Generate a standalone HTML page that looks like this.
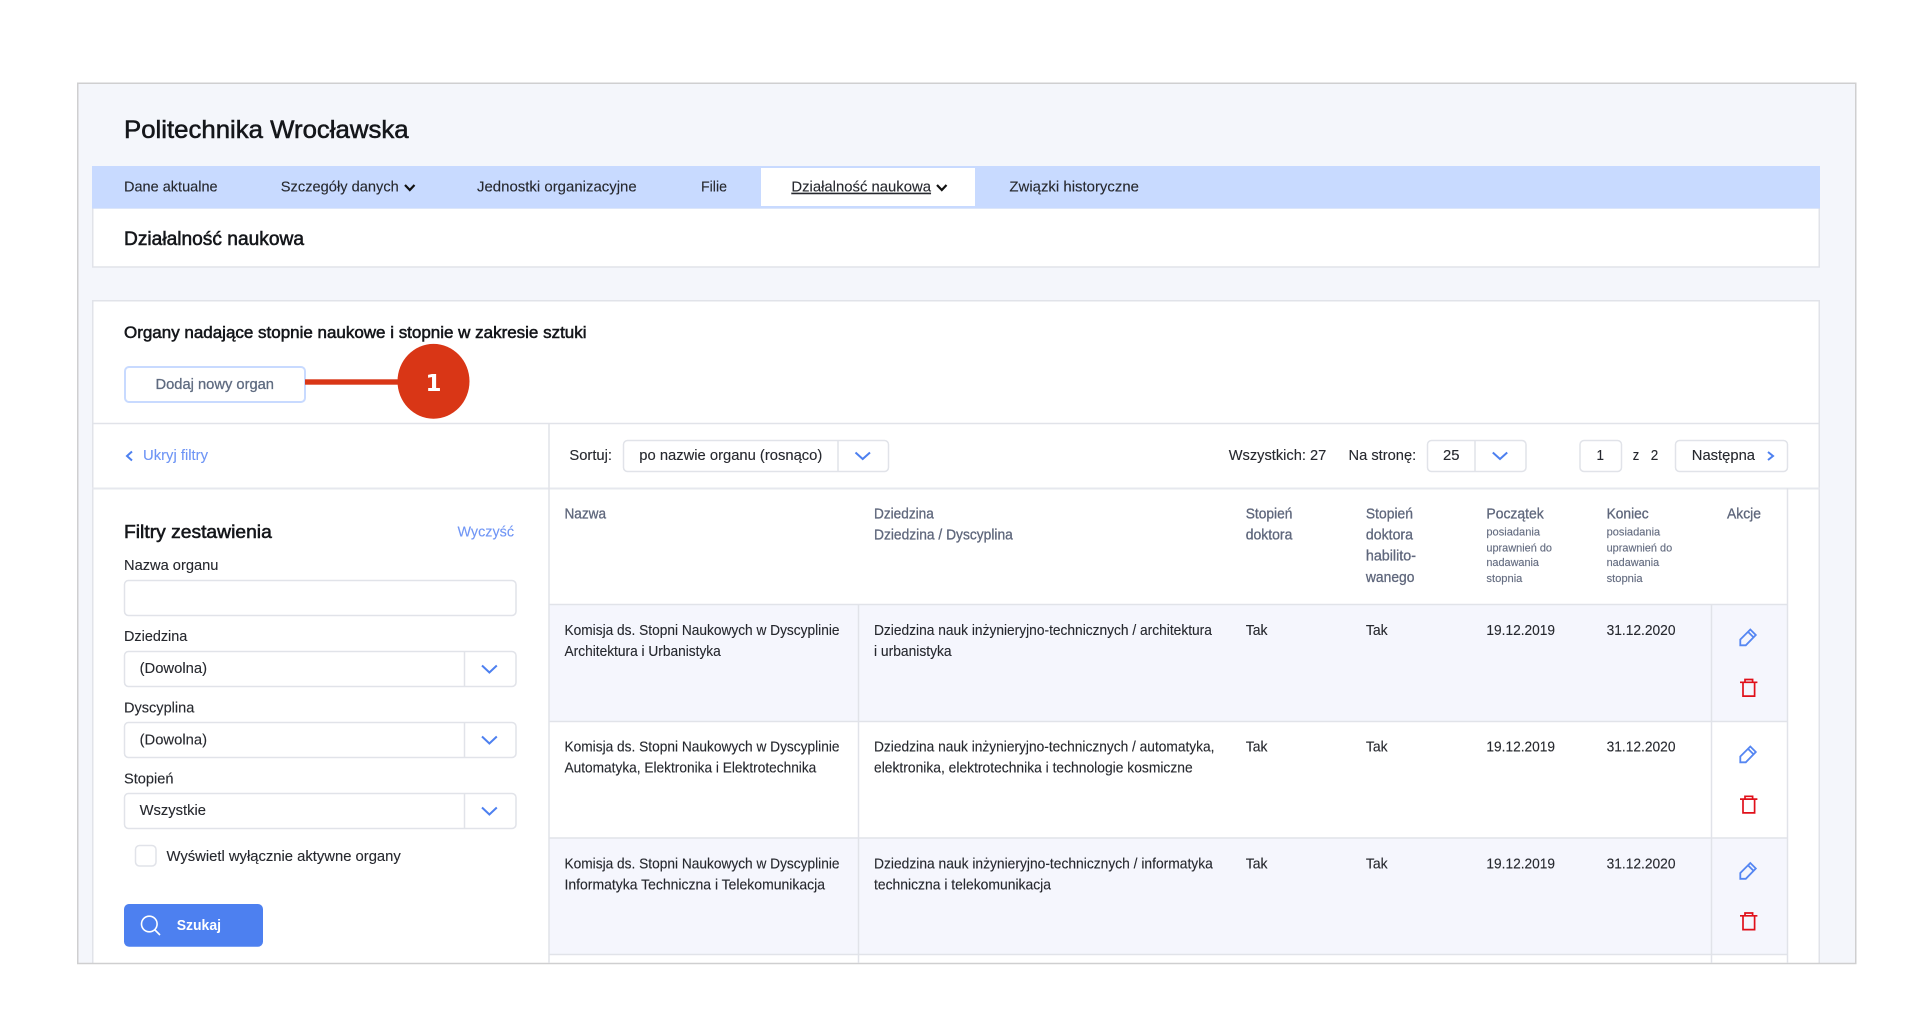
<!DOCTYPE html>
<html lang="pl">
<head>
<meta charset="utf-8">
<title>Politechnika Wrocławska</title>
<style>
html,body{margin:0;padding:0;background:#fff;width:1916px;height:1021px;overflow:hidden}
svg{display:block}
text{font-family:"Liberation Sans",sans-serif;font-size:14.5px;fill:#26282e;stroke:#26282e;stroke-width:.12}
.m{stroke:#14161a;stroke-width:.55;fill:#14161a}
.h{fill:#5f677c;stroke:#5f677c;stroke-width:.3;font-size:14.5px}
.s{fill:#666e82;stroke:#666e82;stroke-width:.15;font-size:11px}
.l{fill:#6f95f5;stroke:#6f95f5}
.n{font-size:15px}
.ln{stroke:#e1e3e9;stroke-width:1.5;fill:none}
.box{fill:#fff;stroke:#e1e3e9;stroke-width:1.5}
.cv{fill:none;stroke:#4d80f0;stroke-width:2}
.ed{fill:none;stroke:#5586f2;stroke-width:1.8}
.tr{fill:none;stroke:#e0101a;stroke-width:1.7}
</style>
</head>
<body>
<svg width="1916" height="1021" viewBox="0 0 1916 1021" xmlns="http://www.w3.org/2000/svg">
<defs>
<g id="pen"><path d="M1 16.8V11L11 1L16.5 6.5L6.5 16.8Z"/><path d="M8.8 3.4L14.2 8.8"/></g>
<g id="bin"><path d="M0 3.8H17.4"/><path d="M5 3.8V1H12.6V3.8"/><path d="M3 3.8V17.6H14.6V3.8"/></g>
</defs>
<rect width="1916" height="1021" fill="#fff"/>
<rect x="77.75" y="83.25" width="1778" height="880.5" fill="#f4f6fb" stroke="#cfcfd0" stroke-width="1.5"/>

<text x="124" y="138" class="m" style="font-size:25px" textLength="284.6" lengthAdjust="spacingAndGlyphs">Politechnika Wrocławska</text>

<rect x="92.75" y="208" width="1726.5" height="59" fill="#fff" stroke="#e1e3e9" stroke-width="1.5"/>
<rect x="92" y="166" width="1728" height="42.5" fill="#c8daff"/>
<rect x="761" y="168" width="214" height="38" fill="#fff"/>
<g class="n">
<text x="124" y="191.7" class="n" textLength="93.6" lengthAdjust="spacingAndGlyphs">Dane aktualne</text>
<text x="280.8" y="191.7" class="n" textLength="118" lengthAdjust="spacingAndGlyphs">Szczegóły danych</text>
<text x="477" y="191.7" class="n" textLength="159.7" lengthAdjust="spacingAndGlyphs">Jednostki organizacyjne</text>
<text x="701" y="191.7" class="n" textLength="26" lengthAdjust="spacingAndGlyphs">Filie</text>
<text x="791.4" y="191.7" class="n" text-decoration="underline" textLength="139.6" lengthAdjust="spacingAndGlyphs">Działalność naukowa</text>
<text x="1009.4" y="191.7" class="n" textLength="129.6" lengthAdjust="spacingAndGlyphs">Związki historyczne</text>
</g>
<path d="M405 185L409.8 190L414.5 185" fill="none" stroke="#111" stroke-width="2.2"/>
<path d="M937 185L941.8 190L946.5 185" fill="none" stroke="#111" stroke-width="2.2"/>

<text x="124" y="245" class="m" style="font-size:19px" textLength="180" lengthAdjust="spacingAndGlyphs">Działalność naukowa</text>

<rect x="92.75" y="300.75" width="1726.5" height="664" fill="#fff" stroke="#e1e3e9" stroke-width="1.5"/>
<rect x="77" y="963" width="1779.5" height="58" fill="#fff"/>
<path d="M77 963.5H1856.5" stroke="#cfcfd0" stroke-width="1.5"/>

<text x="124" y="338" class="m" style="font-size:17px" textLength="462.5" lengthAdjust="spacingAndGlyphs">Organy nadające stopnie naukowe i stopnie w zakresie sztuki</text>

<rect x="125" y="367" width="180" height="35" rx="4" fill="#fff" stroke="#c8daff" stroke-width="2"/>
<text x="155.5" y="389" style="font-size:15px;fill:#5f6b80;stroke:#5f6b80;stroke-width:.3" textLength="118.5" lengthAdjust="spacingAndGlyphs">Dodaj nowy organ</text>
<rect x="305" y="379.3" width="96" height="5.4" fill="#d93616"/>
<ellipse cx="433.5" cy="381.3" rx="36" ry="37.4" fill="#d93616"/>
<text x="433.5" y="391" text-anchor="middle" style="font-family:'DejaVu Sans',sans-serif;font-size:23px;font-weight:bold;fill:#fff;stroke:none">1</text>

<path class="ln" d="M92 423.5H1820"/>
<path d="M92 488.5H1820" stroke="#e6e8ee" stroke-width="2"/>

<path d="M132 451.5L127 456L132 460.5" fill="none" stroke="#4d80f0" stroke-width="2"/>
<text x="143" y="460" class="l n" textLength="65" lengthAdjust="spacingAndGlyphs">Ukryj filtry</text>

<text x="569.4" y="460" class="n" textLength="42.6" lengthAdjust="spacingAndGlyphs">Sortuj:</text>
<rect x="623.5" y="440.5" width="265" height="31" rx="4" class="box"/>
<path class="ln" d="M838 441V471"/>
<text x="639.3" y="460" class="n" textLength="183" lengthAdjust="spacingAndGlyphs">po nazwie organu (rosnąco)</text>
<path class="cv" d="M855.5 452.5L862.7 459L870 452.5"/>

<text x="1228.7" y="460" class="n" textLength="97.6" lengthAdjust="spacingAndGlyphs">Wszystkich: 27</text>
<text x="1348.5" y="460" class="n" textLength="67.7" lengthAdjust="spacingAndGlyphs">Na stronę:</text>
<rect x="1427.5" y="440.5" width="98.5" height="31" rx="4" class="box"/>
<path class="ln" d="M1475 441V471"/>
<text x="1443" y="460" class="n" textLength="16.5" lengthAdjust="spacingAndGlyphs">25</text>
<path class="cv" d="M1492.8 452.5L1500 459L1507.2 452.5"/>
<rect x="1580" y="440.5" width="41.5" height="31" rx="4" class="box"/>
<text x="1596.5" y="460" class="n" textLength="7.5" lengthAdjust="spacingAndGlyphs">1</text>
<text x="1632.8" y="460" class="n" textLength="6.5" lengthAdjust="spacingAndGlyphs">z</text>
<text x="1650.8" y="460" class="n" textLength="7.5" lengthAdjust="spacingAndGlyphs">2</text>
<rect x="1675.5" y="440.5" width="112" height="31" rx="4" class="box"/>
<text x="1691.8" y="460" class="n" textLength="63.2" lengthAdjust="spacingAndGlyphs">Następna</text>
<path d="M1768 452L1773 456L1768 460" fill="none" stroke="#4d80f0" stroke-width="2"/>

<!-- table backgrounds -->
<rect x="549" y="605" width="1238.5" height="116.5" fill="#f5f6fd"/>
<rect x="549" y="838" width="1238.5" height="116.5" fill="#f5f6fd"/>
<path class="ln" d="M549 423V963"/>
<path class="ln" d="M1787.5 488V963"/>
<path class="ln" d="M858.5 605V963"/>
<path class="ln" d="M1711.5 605V963"/>
<path class="ln" d="M549 604.5H1787.5"/>
<path class="ln" d="M549 721.5H1787.5"/>
<path class="ln" d="M549 838H1787.5"/>
<path class="ln" d="M549 954.5H1787.5"/>

<!-- filters -->
<text x="124" y="538" class="m" style="font-size:18.5px" textLength="147.8" lengthAdjust="spacingAndGlyphs">Filtry zestawienia</text>
<text x="457.5" y="536.7" class="l n" textLength="56.5" lengthAdjust="spacingAndGlyphs">Wyczyść</text>
<text x="124" y="570" class="n" textLength="94.4" lengthAdjust="spacingAndGlyphs">Nazwa organu</text>
<rect x="124.5" y="580.5" width="391.5" height="35" rx="4" class="box"/>
<text x="124" y="641" class="n" textLength="63.3" lengthAdjust="spacingAndGlyphs">Dziedzina</text>
<rect x="124.5" y="651.5" width="391.5" height="35" rx="4" class="box"/>
<path class="ln" d="M464.5 652V686"/>
<text x="139.6" y="673" class="n" textLength="67.4" lengthAdjust="spacingAndGlyphs">(Dowolna)</text>
<path class="cv" d="M482 665.5L489.4 672.5L496.8 665.5"/>
<text x="124" y="712.3" class="n" textLength="70.3" lengthAdjust="spacingAndGlyphs">Dyscyplina</text>
<rect x="124.5" y="722.5" width="391.5" height="35" rx="4" class="box"/>
<path class="ln" d="M464.5 723V757"/>
<text x="139.6" y="744.3" class="n" textLength="67.4" lengthAdjust="spacingAndGlyphs">(Dowolna)</text>
<path class="cv" d="M482 736.5L489.4 743.5L496.8 736.5"/>
<text x="124" y="783.3" class="n" textLength="49.5" lengthAdjust="spacingAndGlyphs">Stopień</text>
<rect x="124.5" y="793.5" width="391.5" height="35" rx="4" class="box"/>
<path class="ln" d="M464.5 794V828"/>
<text x="139.6" y="815" class="n" textLength="66.4" lengthAdjust="spacingAndGlyphs">Wszystkie</text>
<path class="cv" d="M482 807.5L489.4 814.5L496.8 807.5"/>
<rect x="135.5" y="845.5" width="20.5" height="20.5" rx="4" class="box"/>
<text x="166.5" y="861" class="n" textLength="234.3" lengthAdjust="spacingAndGlyphs">Wyświetl wyłącznie aktywne organy</text>
<rect x="124" y="904" width="139" height="42.7" rx="5" fill="#4d80f0"/>
<circle cx="149.3" cy="924" r="7.8" fill="none" stroke="#fff" stroke-width="1.6"/>
<path d="M155 930L160 935" stroke="#fff" stroke-width="1.6"/>
<text x="176.7" y="930" style="font-size:15px;font-weight:bold;fill:#fff;stroke:none" textLength="44.3" lengthAdjust="spacingAndGlyphs">Szukaj</text>

<!-- table header -->
<text x="564.5" y="518.3" class="h" textLength="41.5" lengthAdjust="spacingAndGlyphs">Nazwa</text>
<text x="874" y="518.3" class="h" textLength="59.8" lengthAdjust="spacingAndGlyphs">Dziedzina</text>
<text x="874" y="539.3" class="h" textLength="138.8" lengthAdjust="spacingAndGlyphs">Dziedzina / Dyscyplina</text>
<text x="1245.7" y="518.3" class="h" textLength="46.7" lengthAdjust="spacingAndGlyphs">Stopień</text>
<text x="1245.7" y="539.7" class="h" textLength="46.7" lengthAdjust="spacingAndGlyphs">doktora</text>
<text x="1365.9" y="518.3" class="h" textLength="47.1" lengthAdjust="spacingAndGlyphs">Stopień</text>
<text x="1365.9" y="539.7" class="h" textLength="47.1" lengthAdjust="spacingAndGlyphs">doktora</text>
<text x="1365.9" y="560.7" class="h" textLength="50.1" lengthAdjust="spacingAndGlyphs">habilito-</text>
<text x="1365.9" y="582" class="h" textLength="48.6" lengthAdjust="spacingAndGlyphs">wanego</text>
<text x="1486.4" y="518.3" class="h" textLength="57.4" lengthAdjust="spacingAndGlyphs">Początek</text>
<text x="1486.4" y="535.3" class="s" textLength="53.6" lengthAdjust="spacingAndGlyphs">posiadania</text>
<text x="1486.4" y="551.3" class="s" textLength="65.6" lengthAdjust="spacingAndGlyphs">uprawnień do</text>
<text x="1486.4" y="566" class="s" textLength="52.6" lengthAdjust="spacingAndGlyphs">nadawania</text>
<text x="1486.4" y="582" class="s" textLength="36" lengthAdjust="spacingAndGlyphs">stopnia</text>
<text x="1606.6" y="518.3" class="h" textLength="42.1" lengthAdjust="spacingAndGlyphs">Koniec</text>
<text x="1606.6" y="535.3" class="s" textLength="53.6" lengthAdjust="spacingAndGlyphs">posiadania</text>
<text x="1606.6" y="551.3" class="s" textLength="65.6" lengthAdjust="spacingAndGlyphs">uprawnień do</text>
<text x="1606.6" y="566" class="s" textLength="52.6" lengthAdjust="spacingAndGlyphs">nadawania</text>
<text x="1606.6" y="582" class="s" textLength="36" lengthAdjust="spacingAndGlyphs">stopnia</text>
<text x="1727" y="518.3" class="h" textLength="34" lengthAdjust="spacingAndGlyphs">Akcje</text>

<!-- row 1 -->
<text x="564.5" y="635" textLength="275" lengthAdjust="spacingAndGlyphs">Komisja ds. Stopni Naukowych w Dyscyplinie</text>
<text x="564.5" y="656" textLength="156.3" lengthAdjust="spacingAndGlyphs">Architektura i Urbanistyka</text>
<text x="874" y="635" textLength="337.9" lengthAdjust="spacingAndGlyphs">Dziedzina nauk inżynieryjno-technicznych / architektura</text>
<text x="874" y="656" textLength="77.6" lengthAdjust="spacingAndGlyphs">i urbanistyka</text>
<text x="1245.7" y="635" textLength="21.8" lengthAdjust="spacingAndGlyphs">Tak</text>
<text x="1365.9" y="635" textLength="21.8" lengthAdjust="spacingAndGlyphs">Tak</text>
<text x="1486.4" y="635" textLength="68.6" lengthAdjust="spacingAndGlyphs">19.12.2019</text>
<text x="1606.6" y="635" textLength="68.9" lengthAdjust="spacingAndGlyphs">31.12.2020</text>
<use href="#pen" x="1739.3" y="628.5" class="ed"/>
<use href="#bin" x="1740" y="678.5" class="tr"/>

<!-- row 2 -->
<text x="564.5" y="751.7" textLength="275" lengthAdjust="spacingAndGlyphs">Komisja ds. Stopni Naukowych w Dyscyplinie</text>
<text x="564.5" y="772.7" textLength="251.8" lengthAdjust="spacingAndGlyphs">Automatyka, Elektronika i Elektrotechnika</text>
<text x="874" y="751.7" textLength="340.5" lengthAdjust="spacingAndGlyphs">Dziedzina nauk inżynieryjno-technicznych / automatyka,</text>
<text x="874" y="772.7" textLength="318.7" lengthAdjust="spacingAndGlyphs">elektronika, elektrotechnika i technologie kosmiczne</text>
<text x="1245.7" y="751.7" textLength="21.8" lengthAdjust="spacingAndGlyphs">Tak</text>
<text x="1365.9" y="751.7" textLength="21.8" lengthAdjust="spacingAndGlyphs">Tak</text>
<text x="1486.4" y="751.7" textLength="68.6" lengthAdjust="spacingAndGlyphs">19.12.2019</text>
<text x="1606.6" y="751.7" textLength="68.9" lengthAdjust="spacingAndGlyphs">31.12.2020</text>
<use href="#pen" x="1739.3" y="745.5" class="ed"/>
<use href="#bin" x="1740" y="795.3" class="tr"/>

<!-- row 3 -->
<text x="564.5" y="868.3" textLength="275" lengthAdjust="spacingAndGlyphs">Komisja ds. Stopni Naukowych w Dyscyplinie</text>
<text x="564.5" y="889.5" textLength="260.5" lengthAdjust="spacingAndGlyphs">Informatyka Techniczna i Telekomunikacja</text>
<text x="874" y="868.3" textLength="338.8" lengthAdjust="spacingAndGlyphs">Dziedzina nauk inżynieryjno-technicznych / informatyka</text>
<text x="874" y="889.5" textLength="177" lengthAdjust="spacingAndGlyphs">techniczna i telekomunikacja</text>
<text x="1245.7" y="868.3" textLength="21.8" lengthAdjust="spacingAndGlyphs">Tak</text>
<text x="1365.9" y="868.3" textLength="21.8" lengthAdjust="spacingAndGlyphs">Tak</text>
<text x="1486.4" y="868.3" textLength="68.6" lengthAdjust="spacingAndGlyphs">19.12.2019</text>
<text x="1606.6" y="868.3" textLength="68.9" lengthAdjust="spacingAndGlyphs">31.12.2020</text>
<use href="#pen" x="1739.3" y="862" class="ed"/>
<use href="#bin" x="1740" y="912" class="tr"/>
</svg>
</body>
</html>
